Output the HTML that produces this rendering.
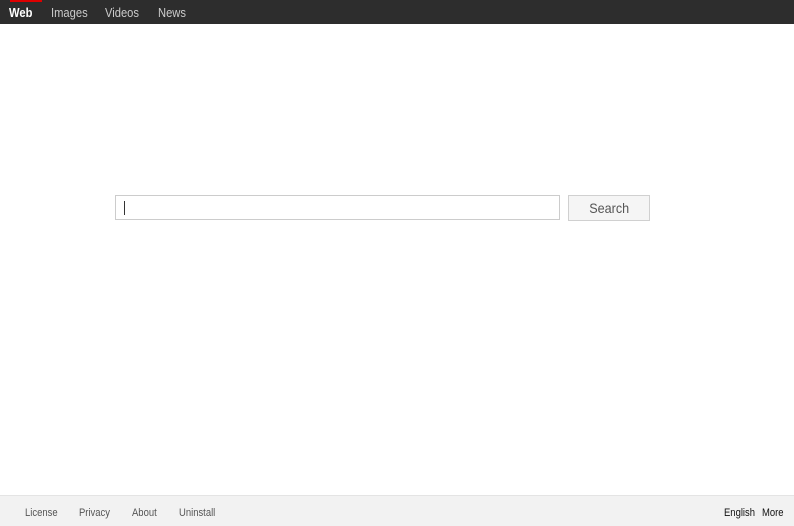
<!DOCTYPE html>
<html><head><style>
*{margin:0;padding:0;box-sizing:border-box}
body{width:794px;height:526px;background:#fff;font-family:"Liberation Sans",Arial,sans-serif;position:relative;overflow:hidden}
.top{position:absolute;left:0;top:0;width:794px;height:24px;background:#2d2d2d}
.top span{position:absolute;top:5px;font-size:13px;color:#ccc;transform:scaleX(0.86);transform-origin:left}
.red{position:absolute;left:10px;top:0;width:32px;height:2px;background:#d00}
.inp{position:absolute;left:115px;top:195px;width:445px;height:25px;border:1px solid #ccc;background:#fff}
.cur{position:absolute;left:8px;top:5px;width:1px;height:14px;background:#333}
.btn{position:absolute;left:568px;top:195px;width:82px;height:26px;border:1px solid #d0d0d0;background:#f5f5f5;color:#555;font-size:14px;text-align:center;line-height:24px}
.btn b{font-weight:normal;display:inline-block;transform:scaleX(0.9)}
.foot{position:absolute;left:0;top:495px;width:794px;height:31px;background:#f2f2f2;border-top:1px solid #e4e4e4}
.foot span{position:absolute;top:11px;font-size:11px;color:#555;transform:scaleX(0.86);transform-origin:left}
.foot .r{color:#111}
</style></head><body>
<div class="top"><div class="red"></div>
<span style="left:9px;color:#fff;font-weight:bold">Web</span>
<span style="left:51px">Images</span>
<span style="left:105px">Videos</span>
<span style="left:158px">News</span>
</div>
<div class="inp"><div class="cur"></div></div>
<div class="btn"><b>Search</b></div>
<div class="foot">
<span style="left:25px">License</span>
<span style="left:79px">Privacy</span>
<span style="left:132px">About</span>
<span style="left:179px">Uninstall</span>
<span class="r" style="left:724px">English</span>
<span class="r" style="left:762px">More</span>
</div>
</body></html>
